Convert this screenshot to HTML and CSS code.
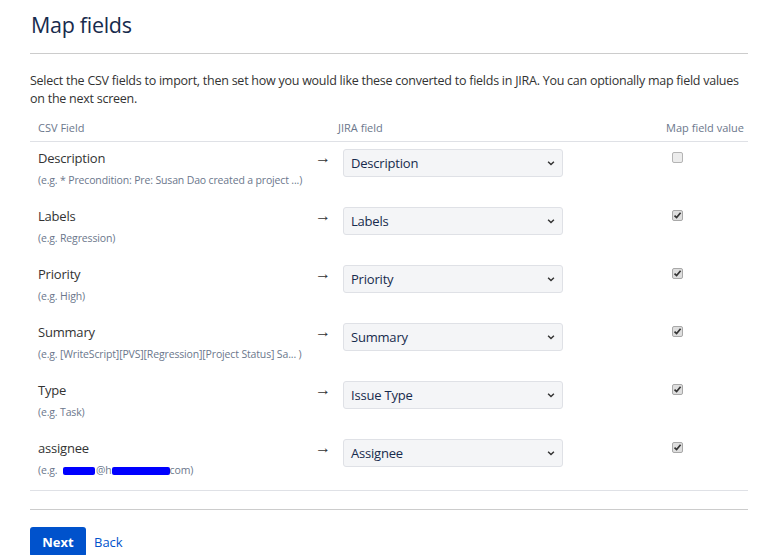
FILE: index.html
```html
<!DOCTYPE html>
<html>
<head>
    <title>Map fields</title>
    <link rel="stylesheet" href="styles.css">
</head>
<body>
    <div class="page">
        <h1 class="page-title">Map fields</h1>
        <hr class="rule">
        <p class="intro">Select the CSV fields to import, then set how you would like these converted to fields in JIRA. You can optionally map field values on the next screen.</p>

        <table class="mapping">
            <colgroup>
                <col class="w-csv">
                <col class="w-arrow">
                <col class="w-jira">
                <col>
            </colgroup>
            <thead>
                <tr>
                    <th class="col-csv">CSV Field</th>
                    <th class="col-arrow"></th>
                    <th class="col-jira">JIRA field</th>
                    <th class="col-map">Map field value</th>
                </tr>
            </thead>
            <tbody>
                <tr>
                    <td class="col-csv">
                        <div class="field-name">Description</div>
                        <div class="field-example">(e.g. * Precondition: Pre: Susan Dao created a project ...)</div>
                    </td>
                    <td class="col-arrow">&rarr;</td>
                    <td class="col-jira">
                        <div class="select"><span>Description</span><svg class="chevron" width="8" height="6" viewBox="0 0 8 6"><path d="M0.6 1.2 L1.6 0.2 L4 2.6 L6.4 0.2 L7.4 1.2 L4 4.6 Z" fill="#333"/></svg></div>
                    </td>
                    <td class="col-map"><span class="check"></span></td>
                </tr>
                <tr>
                    <td class="col-csv">
                        <div class="field-name">Labels</div>
                        <div class="field-example">(e.g. Regression)</div>
                    </td>
                    <td class="col-arrow">&rarr;</td>
                    <td class="col-jira">
                        <div class="select"><span>Labels</span><svg class="chevron" width="8" height="6" viewBox="0 0 8 6"><path d="M0.6 1.2 L1.6 0.2 L4 2.6 L6.4 0.2 L7.4 1.2 L4 4.6 Z" fill="#333"/></svg></div>
                    </td>
                    <td class="col-map"><span class="check checked"><svg width="9" height="9" viewBox="0 0 9 9"><path d="M1.5 4.6 L3.6 6.6 L7.6 1.8" fill="none" stroke="#333" stroke-width="1.7"/></svg></span></td>
                </tr>
                <tr>
                    <td class="col-csv">
                        <div class="field-name">Priority</div>
                        <div class="field-example">(e.g. High)</div>
                    </td>
                    <td class="col-arrow">&rarr;</td>
                    <td class="col-jira">
                        <div class="select"><span>Priority</span><svg class="chevron" width="8" height="6" viewBox="0 0 8 6"><path d="M0.6 1.2 L1.6 0.2 L4 2.6 L6.4 0.2 L7.4 1.2 L4 4.6 Z" fill="#333"/></svg></div>
                    </td>
                    <td class="col-map"><span class="check checked"><svg width="9" height="9" viewBox="0 0 9 9"><path d="M1.5 4.6 L3.6 6.6 L7.6 1.8" fill="none" stroke="#333" stroke-width="1.7"/></svg></span></td>
                </tr>
                <tr>
                    <td class="col-csv">
                        <div class="field-name">Summary</div>
                        <div class="field-example">(e.g. [WriteScript][PVS][Regression][Project Status] Sa... )</div>
                    </td>
                    <td class="col-arrow">&rarr;</td>
                    <td class="col-jira">
                        <div class="select"><span>Summary</span><svg class="chevron" width="8" height="6" viewBox="0 0 8 6"><path d="M0.6 1.2 L1.6 0.2 L4 2.6 L6.4 0.2 L7.4 1.2 L4 4.6 Z" fill="#333"/></svg></div>
                    </td>
                    <td class="col-map"><span class="check checked"><svg width="9" height="9" viewBox="0 0 9 9"><path d="M1.5 4.6 L3.6 6.6 L7.6 1.8" fill="none" stroke="#333" stroke-width="1.7"/></svg></span></td>
                </tr>
                <tr>
                    <td class="col-csv">
                        <div class="field-name">Type</div>
                        <div class="field-example">(e.g. Task)</div>
                    </td>
                    <td class="col-arrow">&rarr;</td>
                    <td class="col-jira">
                        <div class="select"><span>Issue Type</span><svg class="chevron" width="8" height="6" viewBox="0 0 8 6"><path d="M0.6 1.2 L1.6 0.2 L4 2.6 L6.4 0.2 L7.4 1.2 L4 4.6 Z" fill="#333"/></svg></div>
                    </td>
                    <td class="col-map"><span class="check checked"><svg width="9" height="9" viewBox="0 0 9 9"><path d="M1.5 4.6 L3.6 6.6 L7.6 1.8" fill="none" stroke="#333" stroke-width="1.7"/></svg></span></td>
                </tr>
                <tr>
                    <td class="col-csv">
                        <div class="field-name">assignee</div>
                        <div class="field-example">(e.g. <span class="redact redact-user"></span>@h<span class="redact redact-domain"></span>com)</div>
                    </td>
                    <td class="col-arrow">&rarr;</td>
                    <td class="col-jira">
                        <div class="select"><span>Assignee</span><svg class="chevron" width="8" height="6" viewBox="0 0 8 6"><path d="M0.6 1.2 L1.6 0.2 L4 2.6 L6.4 0.2 L7.4 1.2 L4 4.6 Z" fill="#333"/></svg></div>
                    </td>
                    <td class="col-map"><span class="check checked"><svg width="9" height="9" viewBox="0 0 9 9"><path d="M1.5 4.6 L3.6 6.6 L7.6 1.8" fill="none" stroke="#333" stroke-width="1.7"/></svg></span></td>
                </tr>
            </tbody>
        </table>

        <hr class="rule rule-bottom">

        <div class="buttons">
            <button class="btn-primary">Next</button>
            <a class="link" href="#">Back</a>
        </div>
    </div>
</body>
</html>
```

FILE: styles.css
```css
html, body {
    margin: 0;
    padding: 0;
    overflow: hidden;
}

body {
    font-family: "Open Sans", "Noto Sans", sans-serif;
    color: #172b4d;
    background-color: #fff;
}

.page {
    padding: 0 27px 0 30px;
}

.page-title {
    font-size: 21.5px;
    font-weight: 500;
    line-height: 28px;
    margin: 0;
    padding-top: 11px;
    padding-left: 1px;
    letter-spacing: -0.3px;
}

.rule {
    border: none;
    border-top: 1px solid #cccccc;
    margin: 14px 0 0 0;
}

.intro {
    font-size: 12.5px;
    line-height: 18px;
    margin: 18px 0 0 0;
    color: #333;
    letter-spacing: -0.25px;
}

/* mapping table */
.mapping {
    width: 100%;
    table-layout: fixed;
    border-collapse: collapse;
    margin-top: 8px;
    border-bottom: 1px solid #dfe1e6;
}

.w-csv {
    width: 278px;
}

.w-arrow {
    width: 27px;
}

.w-jira {
    width: 300px;
}

.mapping th {
    font-size: 11px;
    font-weight: normal;
    color: #6b778c;
    text-align: left;
    padding: 4px 8px 6px 8px;
    line-height: 15px;
    border-bottom: 1px solid #dfe1e6;
    white-space: nowrap;
}

.mapping td {
    vertical-align: top;
    padding: 7px 8px 0 8px;
    height: 51px;
}

.mapping td.col-arrow {
    font-size: 16px;
    line-height: 17px;
    color: #333;
    padding-left: 7px;
    padding-right: 0;
}

.mapping th.col-jira {
    padding-left: 3px;
}

.mapping th.col-map {
    text-align: right;
    padding-right: 4px;
}

.mapping td.col-map {
    padding-left: 37px;
}

.field-name {
    font-size: 13px;
    line-height: 19px;
    color: #333;
    letter-spacing: -0.2px;
}

.field-example {
    font-size: 10.5px;
    line-height: 14px;
    margin-top: 5px;
    color: #6b778c;
    letter-spacing: -0.15px;
    white-space: nowrap;
}

.redact {
    display: inline-block;
    height: 8px;
    background-color: #0000ff;
    vertical-align: middle;
    border-radius: 2px;
}

.redact-user {
    width: 32px;
    margin: 0 1px 0 3px;
}

.redact-domain {
    width: 58px;
}

.select {
    display: flex;
    align-items: center;
    justify-content: space-between;
    box-sizing: border-box;
    width: 220px;
    height: 28px;
    padding: 0 7px 0 7px;
    background-color: #f4f5f7;
    border: 1px solid #dfe1e6;
    border-radius: 3px;
    font-size: 13px;
    color: #172b4d;
    letter-spacing: -0.2px;
}

.chevron {
    display: block;
    margin-top: 1px;
}

.check {
    display: flex;
    align-items: center;
    justify-content: center;
    box-sizing: border-box;
    width: 11px;
    height: 11px;
    margin-top: 3px;
    border: 1px solid #b4b4b4;
    border-radius: 2px;
    background-color: #ececec;
}

.check.checked {
    background-color: #dedede;
    border-color: #a8a8a8;
}

.rule-bottom {
    margin-top: 18px;
}

.buttons {
    display: flex;
    align-items: center;
    gap: 8px;
    margin-top: 17px;
}

.btn-primary {
    font-family: "Open Sans", "Noto Sans", sans-serif;
    font-size: 13px;
    font-weight: bold;
    color: #fff;
    background-color: #0052cc;
    border: none;
    border-radius: 3px;
    height: 30px;
    width: 56px;
    padding: 0;
}

.link {
    font-size: 13px;
    color: #0052cc;
    text-decoration: none;
}
```
